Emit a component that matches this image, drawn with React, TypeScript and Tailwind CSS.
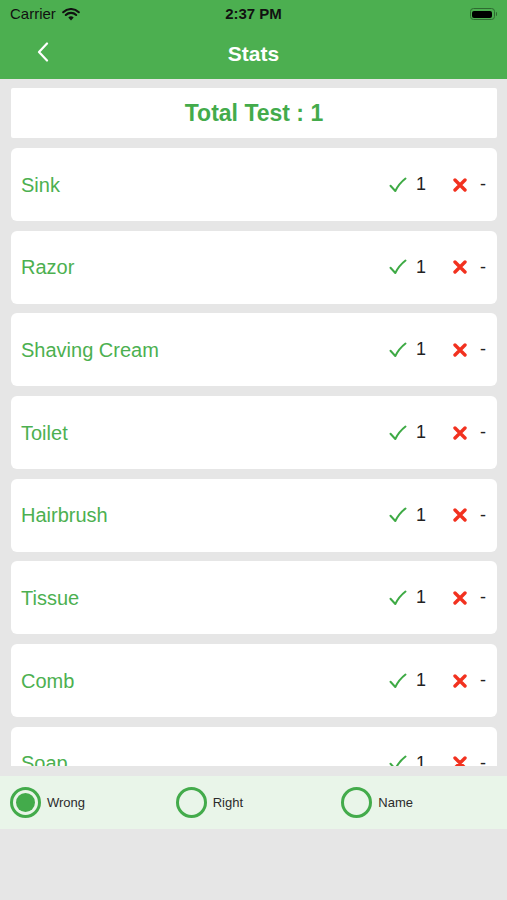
import React from "react";

const items = ["Sink", "Razor", "Shaving Cream", "Toilet", "Hairbrush", "Tissue", "Comb", "Soap", "Towel"];

function Check() {
  return (
    <svg width="18" height="16" viewBox="0 0 18 16" className="block">
      <path d="M1.5 8.8 L6.3 14 Q10 6.5 16.5 1.5" fill="none" stroke="#3eaa45" strokeWidth="2" strokeLinecap="round" strokeLinejoin="round" />
    </svg>
  );
}

function Cross() {
  return (
    <svg width="14" height="14" viewBox="0 0 14 14" className="block">
      <path d="M2 2 L12 12 M12 2 L2 12" fill="none" stroke="#f2311f" strokeWidth="3.4" strokeLinecap="round" />
    </svg>
  );
}

function Radio({ checked, label }: { checked?: boolean; label: string }) {
  return (
    <div className="flex items-center w-[166px]">
      <div className="w-[31px] h-[31px] rounded-full border-[3px] border-[#43ab4b] flex items-center justify-center">
        {checked && <div className="w-[19px] h-[19px] rounded-full bg-[#43ab4b]" />}
      </div>
      <span className="ml-[6px] text-[13px] text-[#2b2b2b]">{label}</span>
    </div>
  );
}

export default function App() {
  return (
    <div className="w-[507px] h-[900px] bg-[#e6e6e6] flex flex-col overflow-hidden" style={{ fontFamily: '"Liberation Sans", Arial, sans-serif' }}>
      <div className="bg-[#4caf50] h-[79px] flex flex-col">
        <div className="h-[28px] flex items-center justify-between px-[10px] relative">
          <div className="flex items-center gap-[6px]">
            <span className="text-[15px] text-[#111]">Carrier</span>
            <svg width="18" height="13" viewBox="0 0 18 13">
              <path d="M9 12.5 L6.3 9.6 A3.8 3.8 0 0 1 11.7 9.6 Z" fill="#111" />
              <path d="M3.8 7 A7.4 7.4 0 0 1 14.2 7" fill="none" stroke="#111" strokeWidth="2.1" strokeLinecap="round" />
              <path d="M1.2 4.2 A11.2 11.2 0 0 1 16.8 4.2" fill="none" stroke="#111" strokeWidth="2.1" strokeLinecap="round" />
            </svg>
          </div>
          <span className="absolute left-1/2 -translate-x-1/2 text-[15px] font-bold text-[#111]">2:37 PM</span>
          <div className="flex items-center">
            <div className="w-[25px] h-[12px] rounded-[3.5px] border border-[#2e6b30] p-[1.5px]">
              <div className="w-full h-full rounded-[2px] bg-black" />
            </div>
            <div className="w-[1.5px] h-[4px] bg-[#2e6b30] rounded-r ml-[1px]" />
          </div>
        </div>
        <div className="flex-1 flex items-center justify-center relative">
          <svg className="absolute left-[37px] top-[14px]" width="12" height="20" viewBox="0 0 12 20">
            <path d="M10 1.5 L2 10 L10 18.5" fill="none" stroke="white" strokeWidth="2.2" strokeLinecap="round" strokeLinejoin="round" />
          </svg>
          <span className="text-white text-[21px] font-bold">Stats</span>
        </div>
      </div>

      <div className="pl-[11px] pr-[10px] pt-[9px]">
        <div className="h-[678px] overflow-hidden">
          <div className="bg-white h-[49.5px] flex items-center justify-center rounded-[2px]">
            <span className="text-[23px] font-bold text-[#43ab4b]">Total Test : 1</span>
          </div>
          <div className="mt-[10.5px] flex flex-col gap-[9.7px]">
            {items.map((name) => (
              <div key={name} className="bg-white h-[73px] rounded-[6px] flex items-center pl-[10px] pr-[11px]">
                <span className="flex-1 text-[20px] text-[#4cb050]">{name}</span>
                <Check />
                <span className="ml-[9px] text-[18px] text-[#222] w-[8px]">1</span>
                <span className="ml-[29px]"><Cross /></span>
                <span className="ml-[13px] text-[18px] text-[#222]">-</span>
              </div>
            ))}
          </div>
        </div>
      </div>

      <div className="mt-[10px] h-[53px] bg-[#e9f5e9] flex items-center pl-[10px]">
        <Radio checked label="Wrong" />
        <Radio label="Right" />
        <Radio label="Name" />
      </div>
    </div>
  );
}
